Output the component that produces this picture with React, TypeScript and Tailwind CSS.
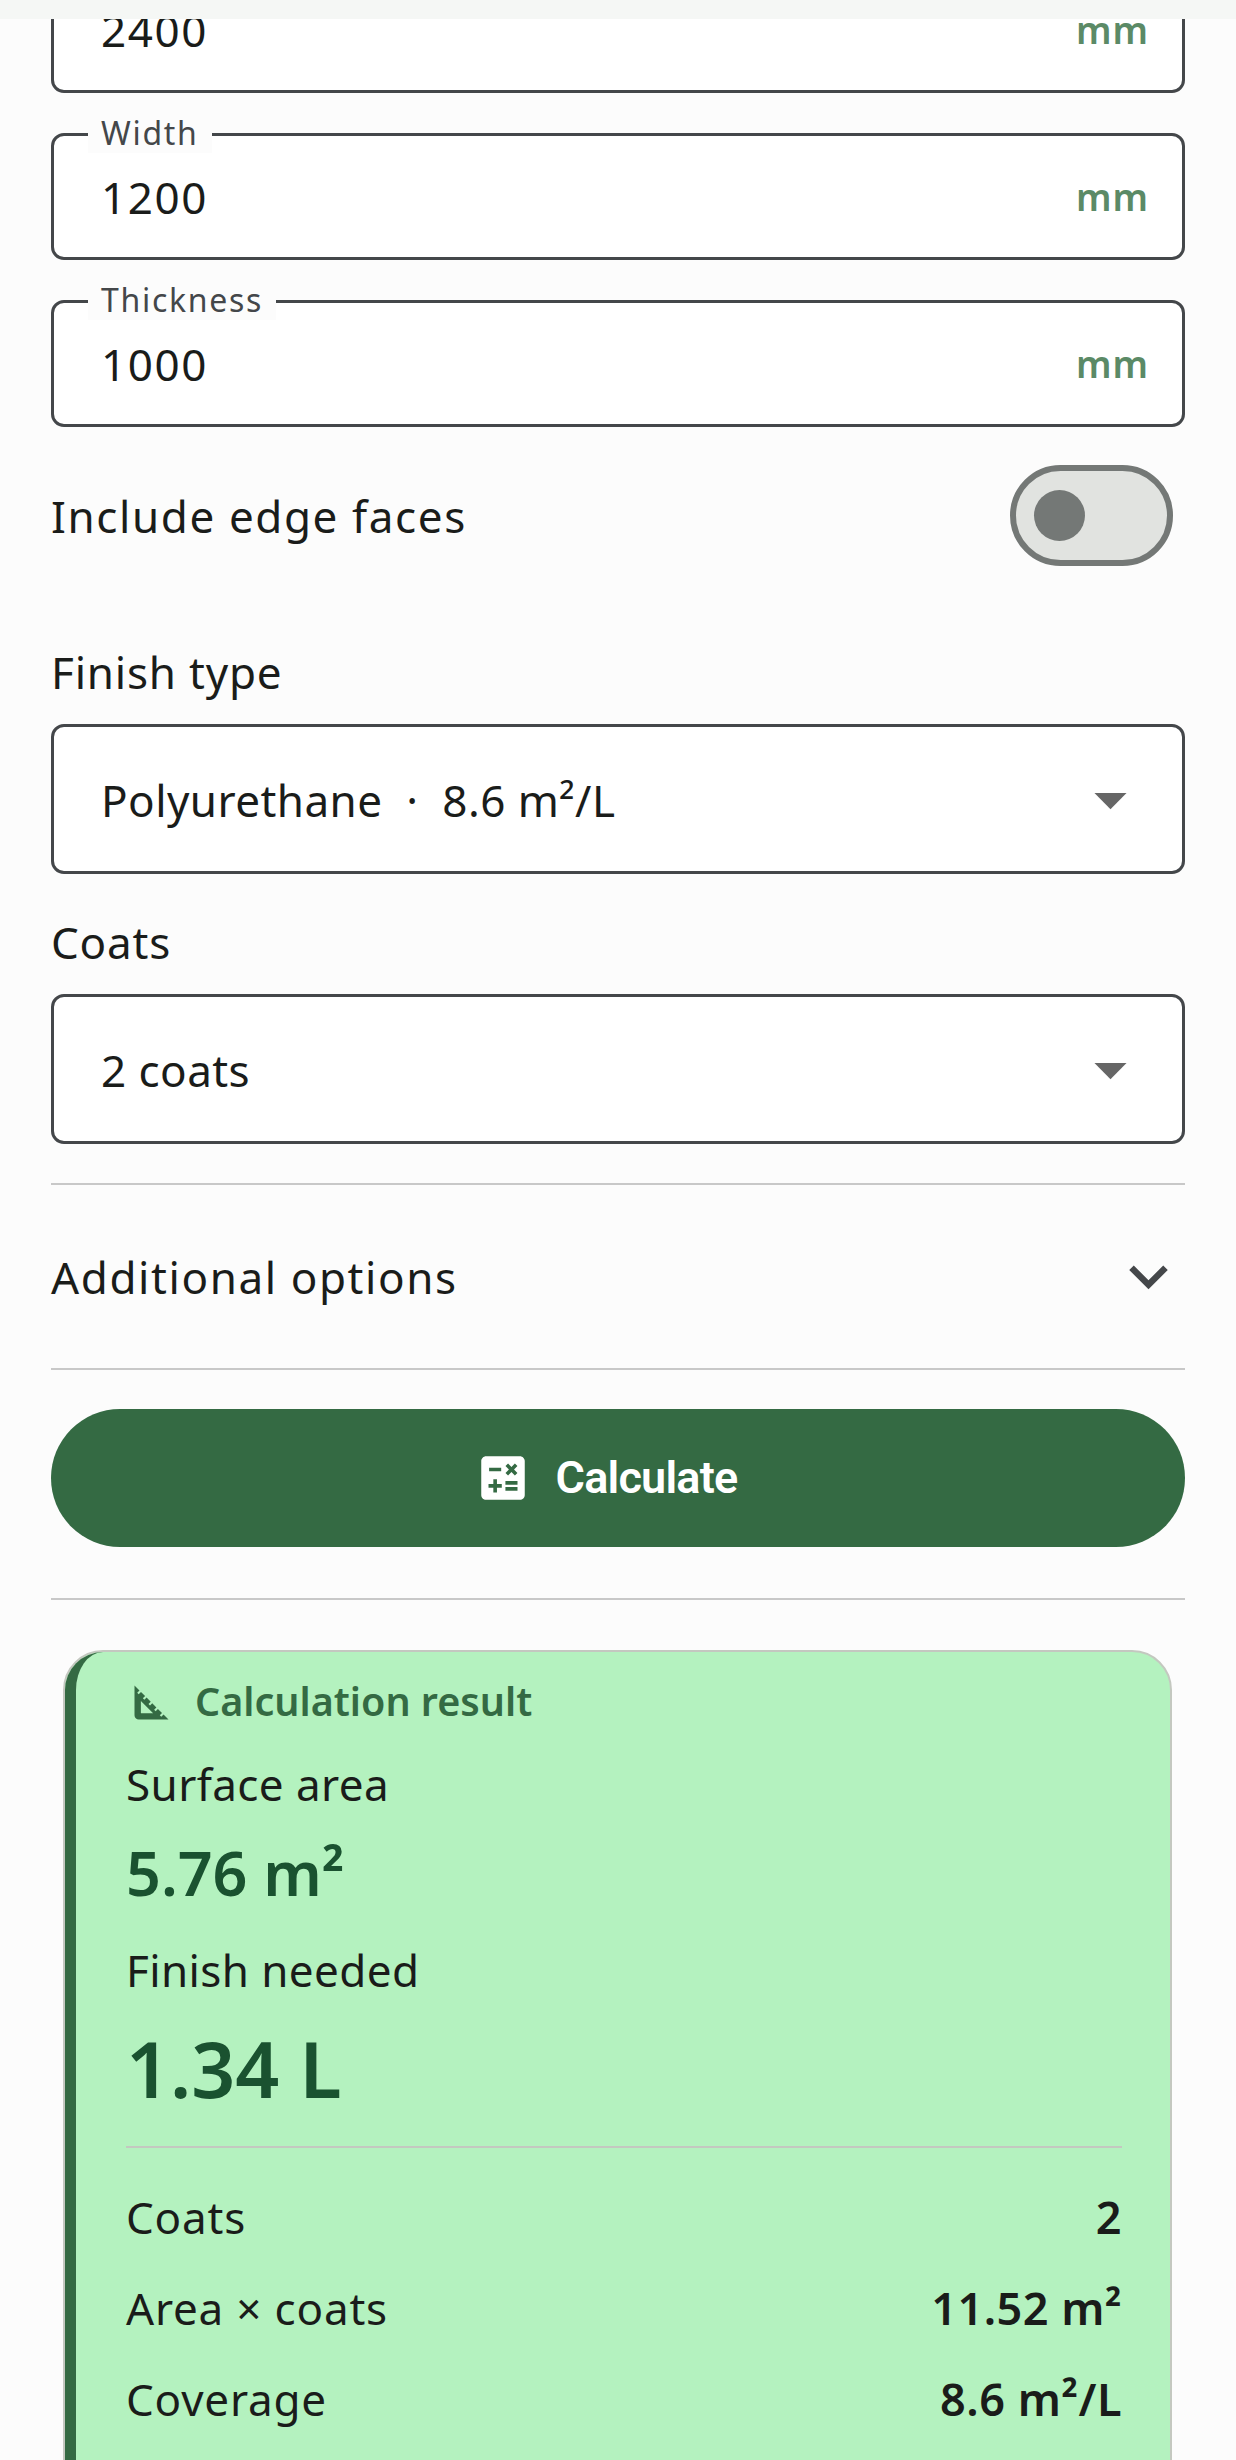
const PAGE_FONT = "font-['Noto_Sans',sans-serif]";

function Field({ label, value }: { label: string; value: string }) {
  return (
    <div className="relative mb-[40px] flex h-[127px] items-center justify-between rounded-[13px] border-[3px] border-[#44474a] bg-white pl-[47px] pr-[33px]">
      <span className="absolute left-[34px] top-[-23px] bg-[#fcfcfc] px-[13px] text-[32px] leading-[40px] tracking-[1.7px] text-[#44474a]">
        {label}
      </span>
      <span className="text-[44px] tracking-[1.6px] text-[#1a1c1a]">{value}</span>
      <span className="text-[37px] font-semibold tracking-[1px] text-[#5b8a66]">mm</span>
    </div>
  );
}

function SelectBox({ value }: { value: string }) {
  return (
    <div className="flex h-[150px] items-center justify-between rounded-[13px] border-[3px] border-[#44474a] bg-white pl-[47px] pr-[33px]">
      <span className="whitespace-pre pt-[2px] text-[44px] tracking-[0.45px] text-[#1a1c1a]">{value}</span>
      <svg viewBox="0 0 24 24" className="h-[77px] w-[77px] fill-[#666666]">
        <path d="M7 10l5 5 5-5z" />
      </svg>
    </div>
  );
}

function DetailRow({ label, value }: { label: string; value: string }) {
  return (
    <div className="flex h-[91px] items-center justify-between">
      <span className="text-[44px] tracking-[0.8px] text-[#1a1c1a]">{label}</span>
      <span className="text-[45px] font-semibold tracking-[0.5px] text-[#1a1c1a]">{value}</span>
    </div>
  );
}

export default function App() {
  return (
    <div className={`flex h-[2460px] w-[1236px] flex-col overflow-hidden bg-[#fcfcfc] ${PAGE_FONT}`}>
      {/* status strip */}
      <div className="h-[19px] shrink-0 bg-[#f5f7f5]" />

      <div className="flex-1 overflow-hidden">
        <div className="mt-[-53px] px-[51px]">
          <Field label="Length" value="2400" />
          <Field label="Width" value="1200" />
          <Field label="Thickness" value="1000" />

          {/* edge faces toggle */}
          <div className="mt-[-2px] flex h-[101px] items-center justify-between pr-[12px]">
            <span className="text-[44px] tracking-[1.6px] text-[#1a1c1a]">Include edge faces</span>
            <div className="flex h-[101px] w-[163px] items-center rounded-full border-[6px] border-[#747876] bg-[#e1e3e0] pl-[18px]">
              <div className="h-[51px] w-[51px] rounded-full bg-[#747876]" />
            </div>
          </div>

          <p className="mt-[74px] text-[44px] leading-[64px] tracking-[0.8px] text-[#1a1c1a]">Finish type</p>
          <div className="mt-[20px]">
            <SelectBox value="Polyurethane  ·  8.6 m²/L" />
          </div>

          <p className="mt-[36px] text-[44px] leading-[64px] tracking-[0.8px] text-[#1a1c1a]">Coats</p>
          <div className="mt-[20px]">
            <SelectBox value="2 coats" />
          </div>

          <div className="mt-[39px] h-[2px] bg-[#c8c8c8]" />
          <div className="flex h-[183px] items-center justify-between">
            <span className="text-[44px] tracking-[1.6px] text-[#1a1c1a]">Additional options</span>
            <svg viewBox="0 0 24 24" className="mr-[-2px] h-[77px] w-[77px] fill-[#44474a]">
              <path d="M16.59 8.59L12 13.17 7.41 8.59 6 10l6 6 6-6z" />
            </svg>
          </div>
          <div className="h-[2px] bg-[#c8c8c8]" />

          <button className="mt-[39px] flex h-[138px] w-full items-center justify-center gap-[24px] rounded-full bg-[#346a43] pr-[25px] font-['Roboto',sans-serif] text-[45px] font-semibold tracking-[-0.8px] text-white">
            <svg viewBox="0 0 24 24" className="h-[58px] w-[58px] fill-white">
              <path d="M19 3H5c-1.1 0-2 .9-2 2v14c0 1.1.9 2 2 2h14c1.1 0 2-.9 2-2V5c0-1.1-.9-2-2-2zm-5.97 4.06L14.09 6l1.41 1.41L16.91 6l1.06 1.06-1.41 1.41 1.41 1.41-1.06 1.06-1.41-1.4-1.41 1.41-1.06-1.06 1.41-1.41-1.41-1.42zm-6.78.66h5v1.5h-5v-1.5zM11.5 16h-2v2H8v-2H6v-1.5h2v-2h1.5v2h2V16zm6.5 1.25h-5v-1.5h5v1.5zm0-2.5h-5v-1.5h5v1.5z" />
            </svg>
            Calculate
          </button>

          <div className="mt-[51px] h-[2px] bg-[#c8c8c8]" />

          {/* result card */}
          <div className="ml-[12px] mr-[13px] mt-[50px] h-[900px] rounded-[40px] border-[2px] border-[#c4c8c0] bg-[#b4f2bf]">
            <div className="h-full rounded-[38px] border-l-[11px] border-[#346a43] pl-[50px] pr-[48px]">
              <div className="flex h-[68px] items-center gap-[18px] pt-[32px]">
                <svg viewBox="0 0 24 24" className="h-[51px] w-[51px] shrink-0 fill-[#346a43]">
                  <path d="M17.66,17.66l-1.06,1.06l-0.71-0.71l1.06-1.06l-1.94-1.94l-1.06,1.06l-0.71-0.71l1.06-1.06l-1.94-1.94l-1.06,1.06 l-0.71-0.71l1.06-1.06L9.7,9.7l-1.06,1.06l-0.71-0.71l1.06-1.06L7.05,7.05L5.99,8.11L5.28,7.4l1.06-1.06L4,4v14c0,1.1,0.9,2,2,2 h14L17.66,17.66z M7,17v-5.76L12.76,17H7z" />
                </svg>
                <span className="text-[39.5px] font-semibold text-[#346a43]">Calculation result</span>
              </div>

              <p className="mt-[32px] text-[44px] leading-[64px] tracking-[0.4px] text-[#1a1c1a]">Surface area</p>
              <p className="mt-[12px] text-[61px] font-semibold leading-[90px] text-[#1a5230]">5.76 m²</p>
              <p className="mt-[20px] text-[44px] leading-[64px] tracking-[0.4px] text-[#1a1c1a]">Finish needed</p>
              <p className="mt-[17px] text-[77px] font-semibold leading-[100px] text-[#1a5230]">1.34 L</p>

              <div className="mt-[27px] h-[1.5px] bg-[#c4c8c0]" />
              <div className="mt-[24px]">
                <DetailRow label="Coats" value="2" />
                <DetailRow label="Area × coats" value="11.52 m²" />
                <DetailRow label="Coverage" value="8.6 m²/L" />
              </div>
            </div>
          </div>
        </div>
      </div>
    </div>
  );
}
